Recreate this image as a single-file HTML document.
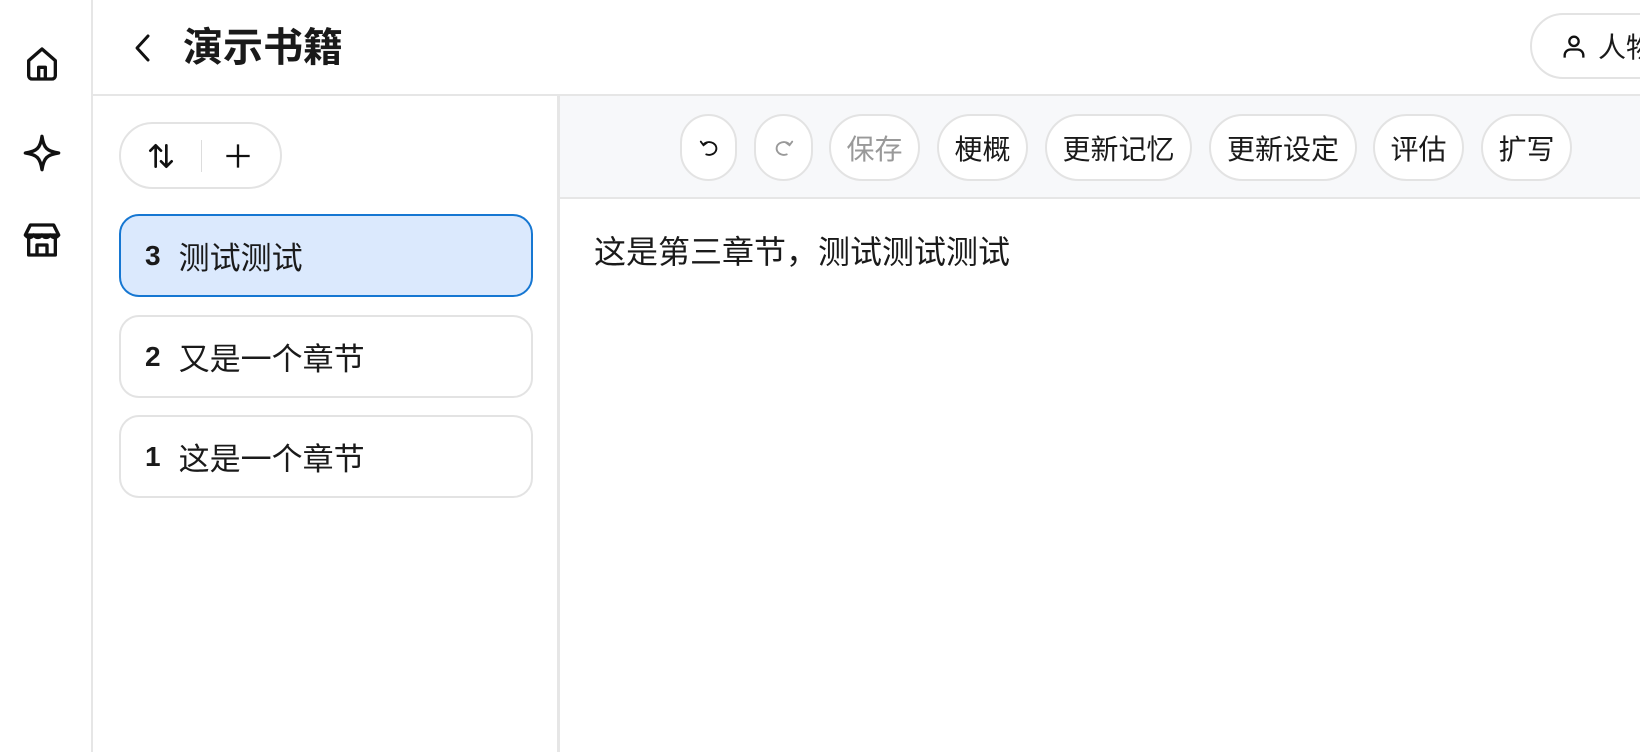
<!DOCTYPE html>
<html><head><meta charset="utf-8"><style>
*{box-sizing:border-box;margin:0;padding:0}
body{width:1640px;height:752px;overflow:hidden;background:#fff;font-family:"Liberation Sans","Noto Sans CJK SC",sans-serif;color:#1a1a1a;position:relative}
.side{position:absolute;left:0;top:0;width:93px;height:752px;border-right:2px solid #e6e6e6}
.side svg{position:absolute;left:22px}
.header{position:absolute;left:93px;top:0;right:0;height:96px;border-bottom:2px solid #e6e6e6}
.title{position:absolute;left:183px;top:23px;font-size:40px;font-weight:bold;line-height:50px}
.pill{position:absolute;border:2px solid #e3e3e3;border-radius:40px;background:#fff;display:flex;align-items:center;justify-content:center;font-size:28px}
.left{position:absolute;left:93px;top:96px;width:467px;bottom:0;border-right:3px solid #e6e6e6}
.card{position:absolute;left:119px;width:414px;height:83px;border:2px solid #e3e3e3;border-radius:20px;font-size:31px;display:flex;align-items:center;padding-left:24px}
.card b{margin-right:18px;font-size:28px}
.card.sel{background:#dbe9fd;border-color:#1677d2}
.tb{position:absolute;left:560px;top:96px;right:0;height:103px;background:#f7f8fa;border-bottom:2px solid #e6e6e6}
.btn{position:absolute;top:114px;height:67px;border:2px solid #e3e3e3;border-radius:34px;background:#fff;font-size:28px;display:flex;align-items:center;justify-content:center}
.content{position:absolute;left:594px;top:230px;font-size:32px;line-height:44px}
</style></head><body>
<div class="side">
<svg style="top:44px" width="40" height="40" viewBox="0 0 24 24" fill="none" stroke="#111" stroke-width="2" stroke-linejoin="round"><path d="M4 10 L12 3 L20 10 V19 a2 2 0 0 1-2 2 H6 a2 2 0 0 1-2-2 Z"/><path d="M10 21 V14 h4 V21"/></svg>
<svg style="top:133px" width="40" height="40" viewBox="0 0 24 24" fill="none" stroke="#111" stroke-width="2" stroke-linejoin="round"><path d="M12 2 C13 9 15 11 22 12 C15 13 13 15 12 22 C11 15 9 13 2 12 C9 11 11 9 12 2Z"/></svg>
<svg style="top:220px" width="40" height="40" viewBox="0 0 24 24" fill="none" stroke="#111" stroke-width="2" stroke-linejoin="round"><path d="M5 3 H19 L22 9 H2 Z"/><path d="M2 9 q2.5 3 5 0 q2.5 3 5 0 q2.5 3 5 0 q2.5 3 5 0"/><path d="M4 11 V21 H20 V11"/><path d="M9 21 V15 H15 V21"/></svg>
</div>
<div class="header"></div>
<svg style="position:absolute;left:130px;top:33px" width="26" height="30" viewBox="0 0 26 30" fill="none" stroke="#111" stroke-width="3" stroke-linecap="round" stroke-linejoin="round"><path d="M18 3 L7 15 L18 27"/></svg>
<div class="title">演示书籍</div>
<div class="pill" style="left:1530px;top:13px;width:160px;height:66px;justify-content:flex-start;padding-left:28px">
<svg width="28" height="30" viewBox="0 0 24 24" fill="none" stroke="#111" stroke-width="2"><circle cx="12" cy="8" r="4"/><path d="M4 22 v-2 a5 5 0 0 1 5-5 h6 a5 5 0 0 1 5 5 v2"/></svg><span style="margin-left:10px">人物</span></div>
<div class="left"></div>
<div class="pill" style="left:119px;top:122px;width:163px;height:67px;justify-content:flex-start">
<svg style="margin-left:24px" width="32" height="32" viewBox="0 0 24 24" fill="none" stroke="#111" stroke-width="2" stroke-linecap="round" stroke-linejoin="round"><path d="M8 20 V4 M4 8 L8 4 L12 8"/><path d="M16 4 V20 M12 16 L16 20 L20 16"/></svg>
<div style="width:1px;height:32px;background:#ddd;margin:0 22px 0 24px"></div>
<svg width="28" height="28" viewBox="0 0 24 24" fill="none" stroke="#111" stroke-width="2"><path d="M12 2 V22 M2 12 H22"/></svg>
</div>
<div class="card sel" style="top:214px"><b>3</b>测试测试</div>
<div class="card" style="top:315px"><b>2</b>又是一个章节</div>
<div class="card" style="top:415px"><b>1</b>这是一个章节</div>
<div class="tb"></div>
<div class="btn" style="left:680px;width:57px"><svg width="22" height="22" viewBox="0 0 24 24" fill="none" stroke="#111" stroke-width="2" stroke-linecap="round"><path d="M6 8 a8 7 0 1 1 3 11"/><path d="M3 5 L6 9 L10 6"/></svg></div>
<div class="btn" style="left:754px;width:59px"><svg width="22" height="22" viewBox="0 0 24 24" fill="none" stroke="#999" stroke-width="2" stroke-linecap="round"><path d="M18 8 a8 7 0 1 0 -3 11"/><path d="M21 5 L18 9 L14 6"/></svg></div>
<div class="btn" style="left:829px;width:91px;color:#999">保存</div>
<div class="btn" style="left:937px;width:91px">梗概</div>
<div class="btn" style="left:1045px;width:147px">更新记忆</div>
<div class="btn" style="left:1209px;width:148px">更新设定</div>
<div class="btn" style="left:1373px;width:91px">评估</div>
<div class="btn" style="left:1481px;width:91px">扩写</div>
<div class="content">这是第三章节，测试测试测试</div>
</body></html>
